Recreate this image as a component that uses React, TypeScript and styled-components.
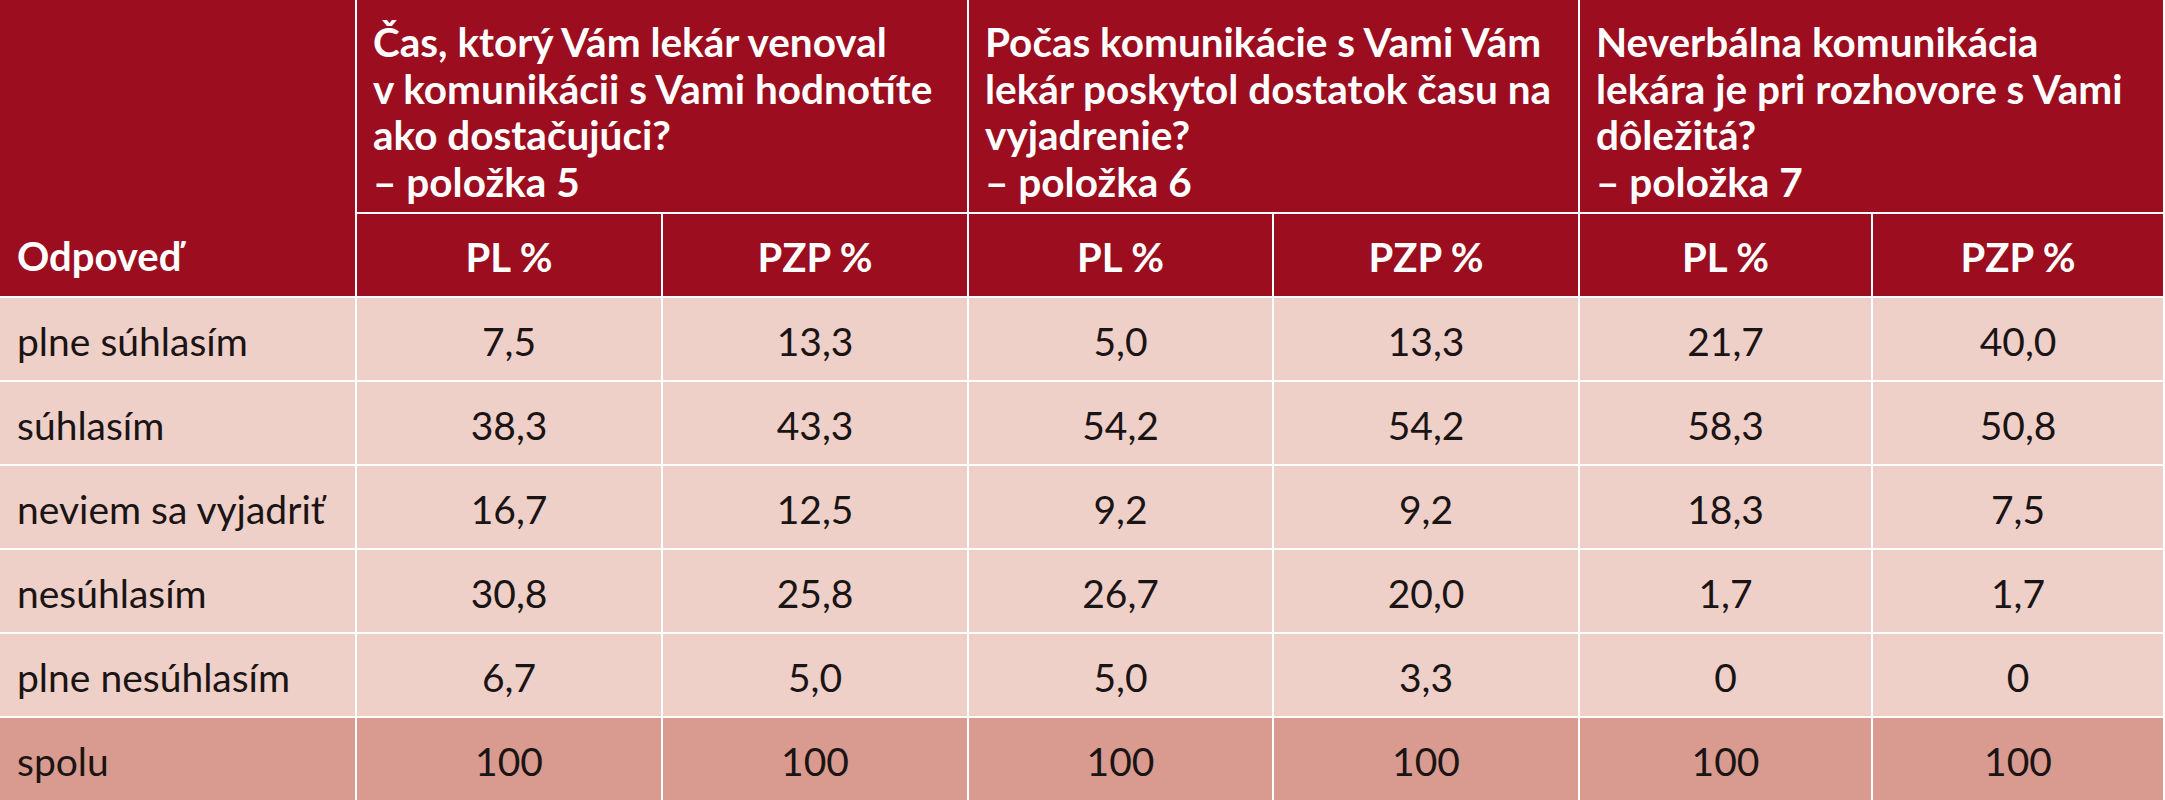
import React from "react";
import styled, { createGlobalStyle } from "styled-components";

const GlobalStyle = createGlobalStyle`
  html, body {
    margin: 0;
    padding: 0;
    background: #ffffff;
  }
  body {
    font-family: Lato, "Open Sans", "Liberation Sans", sans-serif;
  }
`;

const Table = styled.div`
  display: grid;
  grid-template-columns: 355px 304px 304px 303px 304px 291px 290px;
  grid-template-rows: 212px 82px repeat(6, 82px);
  gap: 2px;
  background: #ffffff;
  width: 2163px;
`;

const HeadBase = styled.div`
  background: #9b0d1f;
  color: #ffffff;
  font-weight: 700;
  font-size: 40px;
`;

const CornerCell = styled(HeadBase)`
  grid-row: 1 / span 2;
  display: flex;
  align-items: flex-end;
  padding: 0 0 16px 17px;
  box-sizing: border-box;
`;

const QuestionCell = styled(HeadBase)`
  grid-column: span 2;
  font-size: 40.5px;
  padding: 19px 14px 0 16px;
  line-height: 46.5px;
  box-sizing: border-box;
`;

const SubHeadCell = styled(HeadBase)`
  display: flex;
  align-items: center;
  justify-content: center;
  padding-top: 4px;
  box-sizing: border-box;
`;

const BodyCell = styled.div<{ $total?: boolean }>`
  background: ${(p) => (p.$total ? "#d99b8f" : "#eed0c9")};
  color: #1b1414;
  font-size: 39px;
  display: flex;
  align-items: center;
  padding-top: 4px;
  box-sizing: border-box;
`;

const LabelCell = styled(BodyCell)`
  padding-left: 17px;
`;

const ValueCell = styled(BodyCell)`
  justify-content: center;
`;

const questions = [
  ["Čas, ktorý Vám lekár venoval", "v komunikácii s Vami hodnotíte", "ako dostačujúci?", "– položka 5"],
  ["Počas komunikácie s Vami Vám", "lekár poskytol dostatok času na", "vyjadrenie?", "– položka 6"],
  ["Neverbálna komunikácia", "lekára je pri rozhovore s Vami", "dôležitá?", "– položka 7"],
];

const rows: { label: string; values: string[]; total?: boolean }[] = [
  { label: "plne súhlasím", values: ["7,5", "13,3", "5,0", "13,3", "21,7", "40,0"] },
  { label: "súhlasím", values: ["38,3", "43,3", "54,2", "54,2", "58,3", "50,8"] },
  { label: "neviem sa vyjadriť", values: ["16,7", "12,5", "9,2", "9,2", "18,3", "7,5"] },
  { label: "nesúhlasím", values: ["30,8", "25,8", "26,7", "20,0", "1,7", "1,7"] },
  { label: "plne nesúhlasím", values: ["6,7", "5,0", "5,0", "3,3", "0", "0"] },
  { label: "spolu", values: ["100", "100", "100", "100", "100", "100"], total: true },
];

export default function App() {
  return (
    <>
      <GlobalStyle />
      <Table>
        <CornerCell>Odpoveď</CornerCell>
        {questions.map((q, i) => (
          <QuestionCell key={i}>
            {q.map((line, j) => (
              <React.Fragment key={j}>
                {line}
                {j < q.length - 1 && <br />}
              </React.Fragment>
            ))}
          </QuestionCell>
        ))}
        {questions.map((_, i) => (
          <React.Fragment key={i}>
            <SubHeadCell>PL %</SubHeadCell>
            <SubHeadCell>PZP %</SubHeadCell>
          </React.Fragment>
        ))}
        {rows.map((r) => (
          <React.Fragment key={r.label}>
            <LabelCell $total={r.total}>{r.label}</LabelCell>
            {r.values.map((v, k) => (
              <ValueCell key={k} $total={r.total}>
                {v}
              </ValueCell>
            ))}
          </React.Fragment>
        ))}
      </Table>
    </>
  );
}
